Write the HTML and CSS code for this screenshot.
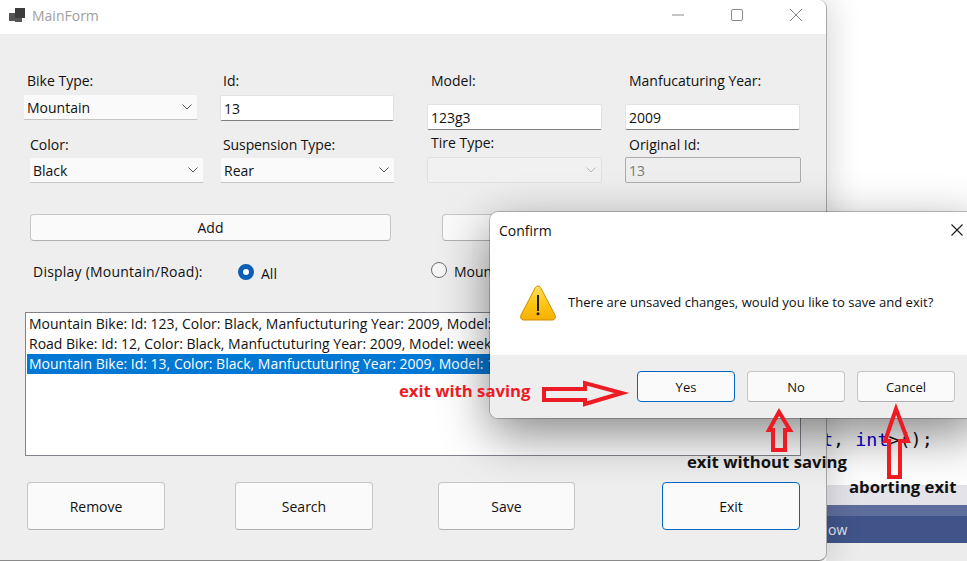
FILE: index.html
```html
<!DOCTYPE html>
<html lang="en">
<head>
<meta charset="utf-8">
<title>MainForm</title>
<link rel="stylesheet" href="styles.css">
</head>
<body>
<div class="desktop">
  <div class="backdrop">
    <div class="code-line"><span class="kw">t</span>, <span class="kw">int</span>&gt;();</div>
    <div class="band"></div>
    <div class="blue-stripe"></div>
    <div class="blue-bar"><span class="blue-text">ow</span></div>
    <div class="backdrop-rest"></div>
  </div>

  <section class="window main-window">
    <header class="titlebar">
      <svg class="app-icon" width="16" height="14" viewBox="0 0 16 14"><rect x="0" y="5" width="6" height="8" fill="#555"/><rect x="6" y="0" width="10" height="10" fill="#3c3c3c"/><rect x="6" y="10" width="7" height="4" fill="#555"/></svg>
      <span class="title-text">MainForm</span>
      <div class="win-controls">
        <svg width="12" height="12" viewBox="0 0 12 12" class="ctl-min"><path d="M0 6H12" stroke="#8a8a8a" fill="none"/></svg>
        <svg width="12" height="12" viewBox="0 0 12 12" class="ctl-max"><rect x=".5" y=".5" width="11" height="11" rx="1.5" stroke="#8a8a8a" fill="none"/></svg>
        <svg width="12" height="12" viewBox="0 0 12 12" class="ctl-close"><path d="M0 0L12 12M12 0L0 12" stroke="#8a8a8a" fill="none"/></svg>
      </div>
    </header>

    <div class="form-body">
      <div class="fields">
        <div class="col col-1">
          <label class="lbl lbl-bike">Bike Type:</label>
          <div class="combo combo-bike"><span>Mountain</span><svg class="chev" width="10" height="6" viewBox="0 0 10 6"><path d="M.5.5L5 5L9.5.5" stroke="#555" fill="none"/></svg></div>
          <label class="lbl lbl-color">Color:</label>
          <div class="combo combo-color"><span>Black</span><svg class="chev" width="10" height="6" viewBox="0 0 10 6"><path d="M.5.5L5 5L9.5.5" stroke="#555" fill="none"/></svg></div>
        </div>
        <div class="col col-2">
          <label class="lbl lbl-id">Id:</label>
          <div class="textbox tb-id">13</div>
          <label class="lbl lbl-susp">Suspension Type:</label>
          <div class="combo"><span>Rear</span><svg class="chev" width="10" height="6" viewBox="0 0 10 6"><path d="M.5.5L5 5L9.5.5" stroke="#555" fill="none"/></svg></div>
        </div>
        <div class="col col-3">
          <label class="lbl lbl-model">Model:</label>
          <div class="textbox tb-model">123g3</div>
          <label class="lbl lbl-tire">Tire Type:</label>
          <div class="combo combo-disabled"><span></span><svg class="chev" width="10" height="6" viewBox="0 0 10 6"><path d="M.5.5L5 5L9.5.5" stroke="#b5b5b5" fill="none"/></svg></div>
        </div>
        <div class="col col-4">
          <label class="lbl lbl-year">Manfucaturing Year:</label>
          <div class="textbox tb-model">2009</div>
          <label class="lbl lbl-orig">Original Id:</label>
          <div class="textbox tb-readonly">13</div>
        </div>
      </div>

      <div class="action-row">
        <button class="btn btn-add">Add</button>
        <button class="btn btn-update">Update</button>
      </div>

      <div class="display-row">
        <span class="lbl-display">Display (Mountain/Road):</span>
        <span class="radio radio-on"></span><span class="radio-text radio-all">All</span>
        <span class="radio radio-off"></span><span class="radio-text radio-mountain">Mountain</span>
      </div>

      <div class="listbox">
        <div class="item">Mountain Bike: Id: 123, Color: Black, Manfuctuturing Year: 2009, Model: abc</div>
        <div class="item">Road Bike: Id: 12, Color: Black, Manfuctuturing Year: 2009, Model: weekend</div>
        <div class="item item-selected">Mountain Bike: Id: 13, Color: Black, Manfuctuturing Year: 2009, Model: 123g3</div>
      </div>

      <div class="bottom-row">
        <button class="btn btn-big btn-remove">Remove</button>
        <button class="btn btn-big btn-search">Search</button>
        <button class="btn btn-big btn-save">Save</button>
        <button class="btn btn-big btn-exit btn-focus">Exit</button>
      </div>
    </div>
  </section>

  <section class="window dialog">
    <header class="dlg-title"><span>Confirm</span>
      <svg class="dlg-close" width="12" height="12" viewBox="0 0 12 12"><path d="M.5.5L11.5 11.5M11.5.5L.5 11.5" stroke="#1a1a1a" fill="none" stroke-width="1.1"/></svg>
    </header>
    <div class="dlg-content">
      <svg class="warn" width="36" height="36" viewBox="0 0 36 36">
        <defs><linearGradient id="wg" x1="0" y1="0" x2="0" y2="1"><stop offset="0" stop-color="#ffe05a"/><stop offset=".55" stop-color="#fdc50f"/><stop offset="1" stop-color="#f6b003"/></linearGradient></defs>
        <path d="M18 1C19.3 1 20.2 1.8 20.8 2.9L35 30C36 32.4 34.9 35 32.5 35H3.5C1.1 35 0 32.4 1 30L15.2 2.9C15.8 1.8 16.7 1 18 1Z" fill="url(#wg)" stroke="#d08a05"/>
        <rect x="17" y="10" width="2" height="16" fill="#1c1c1c"/><circle cx="18" cy="28.8" r="1.5" fill="#1c1c1c"/>
      </svg>
      <span class="dlg-msg">There are unsaved changes, would you like to save and exit?</span>
    </div>
    <footer class="dlg-footer">
      <button class="btn btn-dlg btn-focus">Yes</button>
      <button class="btn btn-dlg">No</button>
      <button class="btn btn-dlg">Cancel</button>
    </footer>
  </section>

  <div class="note note-save">exit with saving</div>
  <div class="note note-nosave">exit without saving</div>
  <div class="note note-abort">aborting exit</div>

  <svg class="arrows" width="967" height="561" viewBox="0 0 967 561">
    <g fill="none" stroke="#ed1c24" stroke-width="4">
      <path d="M544 389H585V383L622 393L585 404V400H544Z"/>
      <path d="M773 450V430H769L779 412L790 430H785V450Z"/>
      <path d="M889 477V441H885L896 409L908 441H900V477Z"/>
    </g>
  </svg>
</div>
</body>
</html>
```
FILE: styles.css
```css
* { box-sizing: border-box; }
html, body { margin: 0; padding: 0; height: 100%; overflow: hidden; }
body { font-family: "Open Sans", "Liberation Sans", sans-serif; font-size: 14px; color: #111; background: #fff; }

.desktop { position: relative; width: 967px; height: 561px; overflow: hidden; background: #fff; }

.backdrop { position: absolute; left: 826px; top: 418px; width: 141px; height: 143px; background: #fff; display: flex; flex-direction: column; }
.code-line { height: 67px; margin-left: -4px; padding-top: 9px; font-family: "DejaVu Sans Mono", monospace; font-size: 18.4px; line-height: 26px; color: #111; white-space: pre; }
.kw { color: #0000d0; }
.band { height: 20px; background: #e3e3e9; }
.blue-stripe { height: 11px; background: #5f6d9c; }
.blue-bar { height: 27px; background: #415489; display: flex; align-items: center; }
.blue-text { color: #e4e6ef; font-size: 14px; padding-left: 2px; }
.backdrop-rest { flex: 1; background: #ececec; }

.window { position: absolute; }
.main-window { left: 0; top: 0; width: 827px; height: 561px; background: #eeeeee; border-right: 1px solid #a8a8a8; border-bottom: 1px solid #8a8a8a; border-radius: 0 8px 8px 0; box-shadow: 6px 0 30px rgba(0,0,0,.14); display: flex; flex-direction: column; }

.titlebar { height: 34px; flex: none; background: #fff; border-radius: 0 8px 0 0; display: flex; align-items: center; padding-left: 9px; }
.app-icon { margin-top: -5px; }
.title-text { margin-left: 7px; margin-top: -4px; color: #a0a0a0; font-size: 14px; }
.win-controls { margin-left: auto; display: flex; align-items: center; margin-right: 24px; margin-top: -4px; }
.ctl-min { margin-right: 47px; }
.ctl-max { margin-right: 47px; }

.form-body { flex: 1; display: flex; flex-direction: column; padding-left: 23px; min-height: 0; }

.fields { display: flex; margin-top: 36px; }
.col { display: flex; flex-direction: column; }
.col-1 { width: 197px; }
.col-2 { width: 207px; }
.col-3 { width: 198px; }
.col-4 { width: 176px; }

.lbl { display: block; line-height: 20px; height: 20px; white-space: nowrap; }
.lbl-bike { margin-left: 4px; margin-top: 1px; margin-bottom: 3px; }
.lbl-color { margin-left: 7px; margin-top: 15px; margin-bottom: 2px; }
.lbl-id { margin-left: 3px; margin-top: 1px; margin-bottom: 4px; }
.lbl-susp { margin-left: 3px; margin-top: 14px; margin-bottom: 2px; letter-spacing: -.1px; }
.lbl-model { margin-left: 4px; margin-top: 1px; margin-bottom: 13px; }
.lbl-tire { margin-left: 4px; margin-top: 3px; margin-bottom: 4px; }
.lbl-year { margin-left: 4px; margin-top: 1px; margin-bottom: 13px; }
.lbl-orig { margin-left: 4px; margin-top: 5px; margin-bottom: 2px; }

.combo, .textbox { width: 175px; flex: none; display: flex; align-items: center; padding-left: 3px; white-space: nowrap; }
.combo { height: 26px; background: #fafafa; border: 1px solid #ededed; border-bottom-color: #c4c4c4; border-radius: 2px; justify-content: space-between; padding-right: 5px; }
.combo-color { margin-left: 6px; }
.combo-disabled { background: #f1f1f1; border-color: #e0e0e0; }
.chev { flex: none; }

.textbox { height: 26px; background: #fff; border: 1px solid #e2e2e2; border-bottom-color: #808080; border-radius: 2px; }
.tb-id { width: 174px; }
.tb-readonly { height: 26px; width: 176px; background: #eeeeee; border: 1px solid #acacac; border-radius: 2px; color: #7a7a7a; }

.action-row { display: flex; margin-top: 31px; padding-left: 7px; }
.btn { font: inherit; color: #111; background: #fafafa; border: 1px solid #c6c6c6; border-bottom-color: #b0b0b0; border-radius: 4px; padding: 0; }
.btn-add { width: 361px; height: 27px; }
.btn-update { width: 359px; height: 27px; margin-left: 51px; }

.display-row { display: flex; align-items: center; height: 20px; margin-top: 21px; padding-left: 10px; }
.lbl-display { width: 205px; margin-top: -2px; letter-spacing: .22px; }
.radio { width: 16px; height: 16px; border-radius: 50%; flex: none; }
.radio-on { background: #fff; border: 5px solid #0a5fb4; }
.radio-off { background: #f6f6f6; border: 1px solid #707070; margin-left: 152px; margin-top: -4px; }
.radio-text { margin-left: 7px; }
.radio-all { width: 18px; margin-top: 2px; }
.radio-mountain { margin-top: -2px; }

.listbox { width: 776px; height: 144px; margin-top: 30px; margin-left: 2px; background: #fff; border: 1px solid #82828c; padding: 1px; }
.item { height: 20px; line-height: 20px; padding-left: 2px; white-space: nowrap; overflow: hidden; }
.item-selected { background: #0078d4; color: #fff; }

.bottom-row { display: flex; margin-top: 26px; padding-left: 4px; }
.btn-big { width: 138px; height: 48px; }
.btn-search { margin-left: 70px; }
.btn-save { margin-left: 65px; width: 137px; }
.btn-exit { margin-left: 87px; }
.btn-focus { border: 1px solid #0067c0; }

.dialog { left: 490px; top: 212px; width: 490px; height: 206px; background: #fff; border-radius: 8px; box-shadow: 0 16px 50px rgba(0,0,0,.48), 0 0 0 1px rgba(0,0,0,.22); display: flex; flex-direction: column; }
.dlg-title { height: 36px; flex: none; display: flex; align-items: center; padding-left: 9px; position: relative; }
.dlg-close { position: absolute; left: 461px; top: 12px; }
.dlg-content { height: 107px; flex: none; display: flex; align-items: center; padding-left: 30px; }
.warn { margin-top: 3px; flex: none; }
.dlg-msg { margin-left: 12px; font-size: 13.07px; white-space: nowrap; }
.dlg-footer { flex: 1; background: #eeeeee; border-radius: 0 0 8px 8px; display: flex; padding: 16px 0 0 147px; gap: 12px; }
.btn-dlg { width: 98px; height: 31px; font-size: 13px; }

.note { position: absolute; font-weight: 700; font-size: 16.7px; line-height: 20px; white-space: nowrap; color: #111; }
.note-save { left: 399px; top: 381px; color: #ed1c24; }
.note-nosave { left: 687px; top: 452px; }
.note-abort { left: 849px; top: 477px; }
.arrows { position: absolute; left: 0; top: 0; pointer-events: none; }
```
